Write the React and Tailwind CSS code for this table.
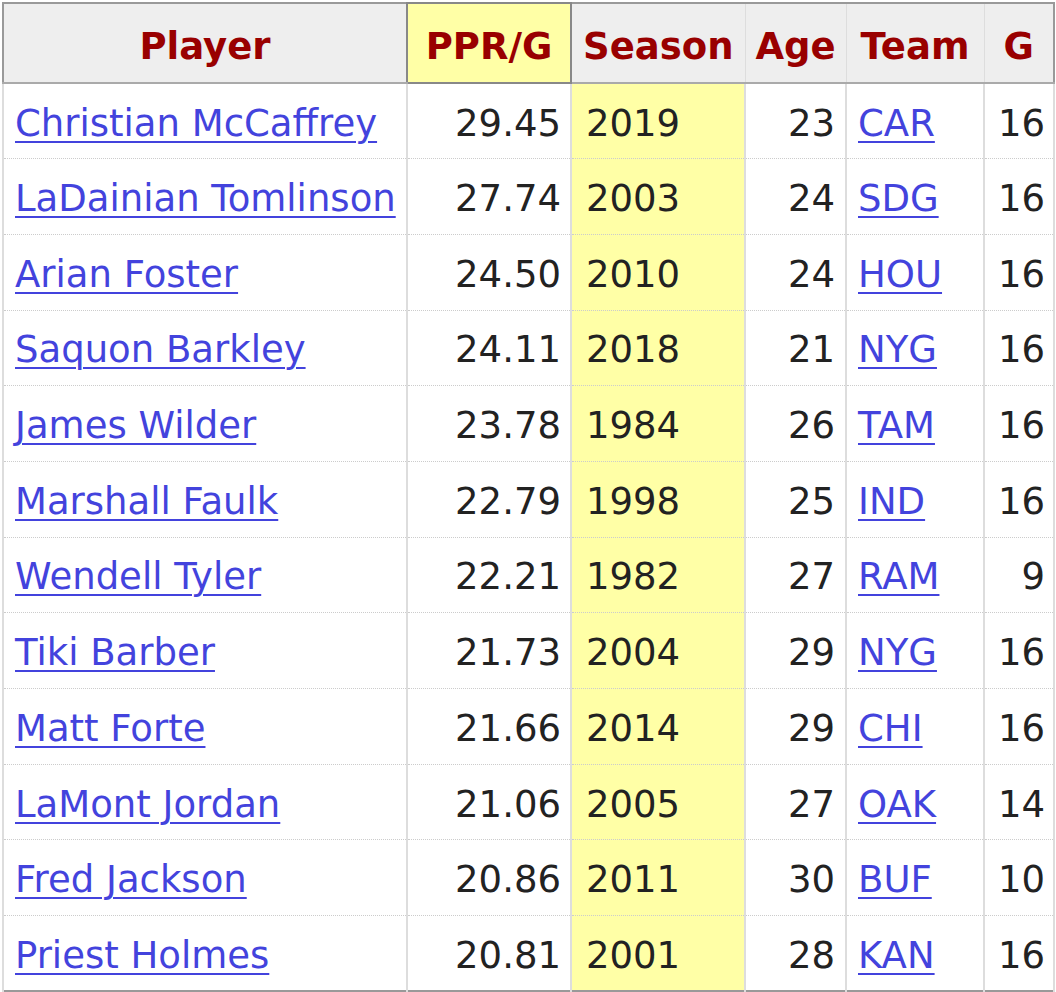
import React from 'react'

const rows = [
    ['Christian McCaffrey', '29.45', '2019', '23', 'CAR', '16'],
    ['LaDainian Tomlinson', '27.74', '2003', '24', 'SDG', '16'],
    ['Arian Foster', '24.50', '2010', '24', 'HOU', '16'],
    ['Saquon Barkley', '24.11', '2018', '21', 'NYG', '16'],
    ['James Wilder', '23.78', '1984', '26', 'TAM', '16'],
    ['Marshall Faulk', '22.79', '1998', '25', 'IND', '16'],
    ['Wendell Tyler', '22.21', '1982', '27', 'RAM', '9'],
    ['Tiki Barber', '21.73', '2004', '29', 'NYG', '16'],
    ['Matt Forte', '21.66', '2014', '29', 'CHI', '16'],
    ['LaMont Jordan', '21.06', '2005', '27', 'OAK', '14'],
    ['Fred Jackson', '20.86', '2011', '30', 'BUF', '10'],
    ['Priest Holmes', '20.81', '2001', '28', 'KAN', '16'],
]

// header cells
const th = 'bg-[#eeeeee] text-[#990000] font-bold text-center border-b-2 border-b-[#aaaaaa] border-x border-x-[#dddddd] px-[6px] pt-[7px]'
// body cells, shared border look
const td = 'whitespace-nowrap border-x-2 border-x-[#dddddd] border-b border-b-[#cccccc] [border-bottom-style:dotted] pt-[4px]'
const link = 'text-[#4343dd] underline underline-offset-[5px] decoration-[2px]'

export default function App() {
    return (
        <div className="bg-white w-[1056px] h-[992px] overflow-hidden pt-[2px] pl-[2px]">
            <table
                className="table-fixed border-collapse border-2 border-[#999999] text-[37px] leading-none text-[#222222] w-[1051px]"
                style={{ fontFamily: '"DejaVu Sans", Verdana, sans-serif' }}
            >
                <colgroup>
                    <col className="w-[404px]" />
                    <col className="w-[164px]" />
                    <col className="w-[174px]" />
                    <col className="w-[101px]" />
                    <col className="w-[138px]" />
                    <col className="w-[70px]" />
                </colgroup>
                <thead>
                    <tr className="h-[80px]">
                        <th className={th}>Player</th>
                        <th className="bg-[#ffffa6] text-[#990000] font-bold text-center border-2 border-[#888888] px-[6px] pt-[7px]">PPR/G</th>
                        <th className={th}>Season</th>
                        <th className={th}>Age</th>
                        <th className={th}>Team</th>
                        <th className={th}>G</th>
                    </tr>
                </thead>
                <tbody>
                    {rows.map((r) => (
                        <tr key={r[0] + r[2]} className="h-[75.7px]">
                            <td className={`${td} px-[11px] text-left`}>
                                <a href="#" className={link}>{r[0]}</a>
                            </td>
                            <td className={`${td} pr-[9px] text-right`}>{r[1]}</td>
                            <td className={`${td} bg-[#ffffa6] px-[14px] text-left`}>{r[2]}</td>
                            <td className={`${td} pr-[10px] text-right`}>{r[3]}</td>
                            <td className={`${td} px-[11px] text-left`}>
                                <a href="#" className={link}>{r[4]}</a>
                            </td>
                            <td className={`${td} pr-[8px] text-right`}>{r[5]}</td>
                        </tr>
                    ))}
                </tbody>
            </table>
        </div>
    )
}
